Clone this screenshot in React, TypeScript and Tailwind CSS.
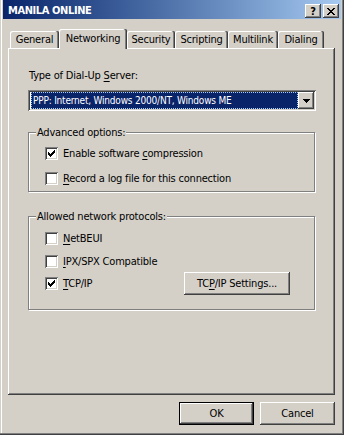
import type { ReactNode } from "react";

const RAISED =
  "shadow-[inset_-1px_-1px_#404040,inset_1px_1px_#ffffff,inset_-2px_-2px_#808080,inset_2px_2px_#d4d0c8]";
const SUNKEN =
  "shadow-[inset_1px_1px_#808080,inset_-1px_-1px_#ffffff,inset_2px_2px_#404040,inset_-2px_-2px_#d4d0c8]";

function Key({ children }: { children: ReactNode }) {
  return <span className="underline decoration-1 underline-offset-[2px]">{children}</span>;
}

function CheckMark() {
  // classic 7x7 pixel tick
  const rows: [number, number, number][] = [
    [0, 6, 6],
    [1, 5, 6],
    [2, 0, 0],
    [2, 4, 6],
    [3, 0, 1],
    [3, 3, 5],
    [4, 0, 4],
    [5, 1, 3],
    [6, 2, 2],
  ];
  return (
    <svg width="7" height="7" viewBox="0 0 7 7" shapeRendering="crispEdges">
      {rows.map(([y, a, b], i) => (
        <rect key={i} x={a} y={y} width={b - a + 1} height={1} fill="#000" />
      ))}
    </svg>
  );
}

function CheckBox({ checked, children }: { checked?: boolean; children: ReactNode }) {
  return (
    <div className="flex h-[13px] items-center">
      <div className={`flex h-[13px] w-[13px] shrink-0 items-center justify-center bg-white ${SUNKEN}`}>
        {checked && <CheckMark />}
      </div>
      <span className="ml-[5px] whitespace-nowrap">{children}</span>
    </div>
  );
}

function Group({ label, className, children }: { label: string; className: string; children: ReactNode }) {
  return (
    <div
      className={`relative w-[287px] border border-[#808080] shadow-[inset_1px_1px_#ffffff,1px_1px_#ffffff] ${className}`}
    >
      <span className="absolute -top-[7px] left-[7px] bg-[#d4d0c8] px-[1px] leading-[13px]">{label}</span>
      {children}
    </div>
  );
}

function Tab({ label, width, selected }: { label: string; width: string; selected?: boolean }) {
  if (selected) {
    return (
      <div
        className={`relative z-10 -mb-px flex h-[20px] items-center justify-center rounded-t-[2px] bg-[#d4d0c8] pb-[2px] shadow-[inset_-1px_0_#404040,inset_-2px_0_#808080,inset_1px_1px_#ffffff] ${width}`}
      >
        {label}
      </div>
    );
  }
  return (
    <div
      className={`flex h-[17px] items-center justify-center rounded-t-[2px] bg-[#d4d0c8] shadow-[inset_-1px_0_#404040,inset_-2px_0_#808080,inset_1px_1px_#ffffff] ${width}`}
    >
      {label}
    </div>
  );
}

function Button({ children, className, isDefault }: { children: ReactNode; className: string; isDefault?: boolean }) {
  if (isDefault) {
    return (
      <div className={`border border-black ${className}`}>
        <div className={`flex h-full w-full items-center justify-center ${RAISED}`}>{children}</div>
      </div>
    );
  }
  return <div className={`flex items-center justify-center ${RAISED} ${className}`}>{children}</div>;
}

export default function App() {
  return (
    <div
      className="flex h-[435px] w-[344px] flex-col bg-[#d4d0c8] px-[3px] text-[11px] leading-[13px] tracking-[-0.2px] text-black shadow-[inset_-1px_-1px_#404040,inset_-2px_-2px_#808080,inset_1px_0_#d4d0c8,inset_2px_0_#ffffff]"
      style={{ fontFamily: '"DejaVu Sans Condensed", "Liberation Sans", Arial, sans-serif' }}
    >
      {/* title bar */}
      <div className="flex h-[19px] w-[338px] items-start bg-linear-to-r from-[#0a246a] to-[#a6caf0] pl-[5px] pr-[2px]">
        <span className="mt-[4px] text-[11px] font-bold leading-[13px] tracking-[-0.4px] text-white">MANILA ONLINE</span>
        <div className="ml-auto mt-[4px] flex gap-[2px]">
          <div className={`flex h-[14px] w-[16px] items-center justify-center bg-[#d4d0c8] text-[11px] font-bold ${RAISED}`}>
            ?
          </div>
          <div className={`flex h-[14px] w-[16px] items-center justify-center bg-[#d4d0c8] ${RAISED}`}>
            <svg width="8" height="7" viewBox="0 0 8 7" shapeRendering="crispEdges">
              <path d="M0 0h2v1h1v1h2v-1h1v-1h2v1h-1v1h-1v1h-1v1h1v1h1v1h1v1h-2v-1h-1v-1h-2v1h-1v1h-2v-1h1v-1h1v-1h1v-1h-1v-1h-1v-1h-1z" fill="#000" />
            </svg>
          </div>
        </div>
      </div>

      <div className="flex flex-col px-[5px]">
        {/* tabs */}
        <div className="mt-[10px] flex h-[19px] items-end pl-[2px]">
          <Tab label="General" width="w-[49px]" />
          <Tab label="Networking" width="w-[68px]" selected />
          <Tab label="Security" width="w-[48px]" />
          <Tab label="Scripting" width="w-[53px]" />
          <Tab label="Multilink" width="w-[50px]" />
          <Tab label="Dialing" width="w-[46px]" />
        </div>

        {/* panel */}
        <div className="flex h-[347px] w-[327px] flex-col pl-[20px] shadow-[inset_-1px_-1px_#404040,inset_1px_1px_#ffffff,inset_-2px_-2px_#808080]">
          <div className="mt-[21px] pl-px">
            Type of Dial-Up <Key>S</Key>erver:
          </div>

          <div className={`mt-[8px] flex h-[21px] w-[288px] items-center bg-white p-[2px] ${SUNKEN}`}>
            <div className="flex h-full flex-1 items-center pl-[1px]">
              <div className="flex h-full flex-1 items-center bg-[#0a246a] pl-[2px] text-[10px] tracking-[-0.2px] text-white outline-1 outline-dotted outline-offset-[-1px] outline-[#a6caf0]">
                PPP: Internet, Windows 2000/NT, Windows ME
              </div>
            </div>
            <div className={`flex h-[17px] w-[16px] items-center justify-center bg-[#d4d0c8] ${RAISED}`}>
              <svg width="7" height="4" viewBox="0 0 7 4" shapeRendering="crispEdges">
                <path d="M0 0h7v1h-1v1h-1v1h-1v1h-1v-1h-1v-1h-1v-1h-1z" fill="#000" />
              </svg>
            </div>
          </div>

          <Group label="Advanced options:" className="mt-[21px] h-[60px] pl-[16px] pt-[14px]">
            <CheckBox checked>
              Enable software <Key>c</Key>ompression
            </CheckBox>
            <div className="mt-[12px]">
              <CheckBox>
                <Key>R</Key>ecord a log file for this connection
              </CheckBox>
            </div>
          </Group>

          <Group label="Allowed network protocols:" className="mt-[24px] h-[94px] pl-[16px] pt-[15px]">
            <CheckBox>
              <Key>N</Key>etBEUI
            </CheckBox>
            <div className="mt-[10px]">
              <CheckBox>
                <Key>I</Key>PX/SPX Compatible
              </CheckBox>
            </div>
            <div className="mt-[4px] flex h-[23px] items-center">
              <div className="w-[139px]">
                <CheckBox checked>
                  <Key>T</Key>CP/IP
                </CheckBox>
              </div>
              <Button className="h-[23px] w-[106px]">
                TC<Key>P</Key>/IP Settings...
              </Button>
            </div>
          </Group>
        </div>

        {/* dialog buttons */}
        <div className="mt-[7px] flex w-[327px] justify-end gap-[6px]">
          <Button className="h-[23px] w-[75px]" isDefault>
            OK
          </Button>
          <Button className="h-[23px] w-[75px]">Cancel</Button>
        </div>
      </div>
    </div>
  );
}
